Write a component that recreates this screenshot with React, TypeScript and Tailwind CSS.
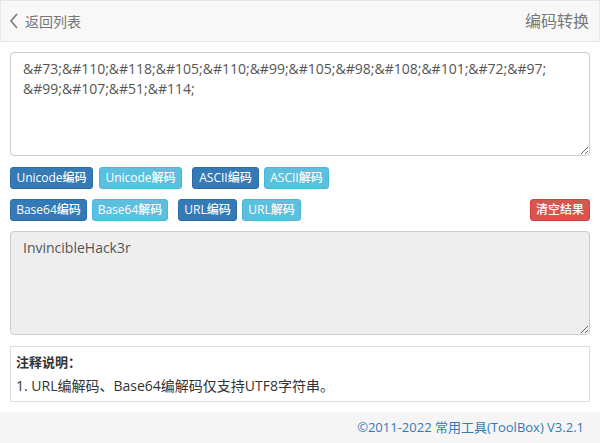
import React from "react";

const btnBase =
  "h-[22px] rounded-[3px] border text-[12px] font-medium leading-[20px] text-white text-center shrink-0 whitespace-nowrap";
const primary = "bg-[#337ab7] border-[#2e6da4]";
const info = "bg-[#5bc0de] border-[#46b8da]";

const App = () => {
  return (
    <div className="w-[600px] h-[443px] bg-white flex flex-col font-['Open_Sans','Noto_Sans_CJK_SC',sans-serif] text-[#333]">
      <header className="h-[42px] shrink-0 border border-[#e7e7e7] bg-[#f8f8f8] flex items-center justify-between pl-[8px] pr-[10px] text-[#777]">
        <div className="flex items-center gap-[6px]">
          <svg width="10" height="16" viewBox="0 0 10 16" fill="none">
            <polyline points="8,1 2,8 8,15" stroke="#777" strokeWidth="1.6" />
          </svg>
          <span className="text-[14px]">返回列表</span>
        </div>
        <span className="text-[16px]">编码转换</span>
      </header>

      <main className="px-[10px] pt-[10px] flex flex-col">
        <textarea
          readOnly
          className="block w-full h-[104px] border border-[#ccc] rounded-[4px] px-[12px] py-[6px] text-[14px] leading-[20px] text-[#555] outline-none"
          value={"&#73;&#110;&#118;&#105;&#110;&#99;&#105;&#98;&#108;&#101;&#72;&#97;\n&#99;&#107;&#51;&#114;"}
        />

        <div className="flex items-center mt-[11px]">
          <button className={`${btnBase} ${primary} w-[83px]`}>Unicode编码</button>
          <button className={`${btnBase} ${info} w-[83px] ml-[6px]`}>Unicode解码</button>
          <button className={`${btnBase} ${primary} w-[67px] ml-[10px]`}>ASCII编码</button>
          <button className={`${btnBase} ${info} w-[65px] ml-[5px]`}>ASCII解码</button>
        </div>

        <div className="flex items-center mt-[10px]">
          <button className={`${btnBase} ${primary} w-[77px]`}>Base64编码</button>
          <button className={`${btnBase} ${info} w-[76px] ml-[5px]`}>Base64解码</button>
          <button className={`${btnBase} ${primary} w-[59px] ml-[10px]`}>URL编码</button>
          <button className={`${btnBase} ${info} w-[59px] ml-[5px]`}>URL解码</button>
          <button className={`${btnBase} bg-[#d9534f] border-[#d43f3a] w-[60px] ml-auto`}>清空结果</button>
        </div>

        <textarea
          readOnly
          className="block w-full h-[104px] mt-[10px] border border-[#ccc] rounded-[4px] bg-[#eee] px-[12px] py-[6px] text-[14px] leading-[20px] text-[#555] outline-none"
          value="InvincibleHack3r"
        />

        <div className="mt-[11px] h-[56px] border border-[#ddd] px-[5px] pt-[4px] text-[14px] leading-[23px]">
          <div className="font-bold text-[13px]">注释说明：</div>
          <div>1. URL编解码、Base64编解码仅支持UTF8字符串。</div>
        </div>
      </main>

      <footer className="mt-[10px] flex-1 bg-[#f5f5f5] flex items-center justify-end pr-[16px] text-[13px] text-[#337ab7]">
        ©2011-2022 常用工具(ToolBox) V3.2.1
      </footer>
    </div>
  );
};

export default App;
